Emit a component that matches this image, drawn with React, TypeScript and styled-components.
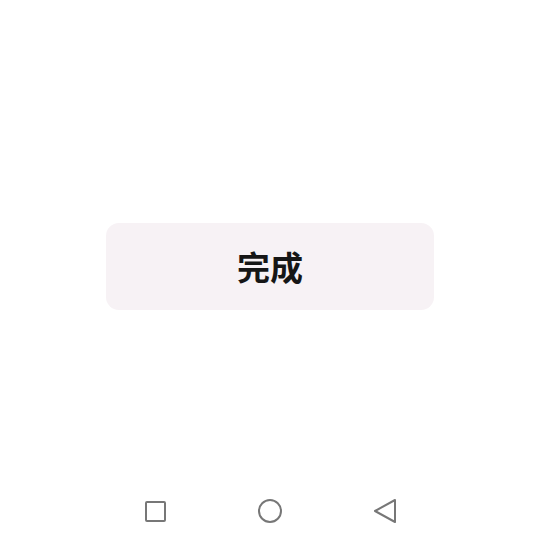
import styled, { createGlobalStyle } from "styled-components";

const Global = createGlobalStyle`
  html, body {
    margin: 0;
    padding: 0;
    background: #ffffff;
  }
  body {
    font-family: "Noto Sans CJK SC", "Noto Sans", sans-serif;
  }
`;

const Screen = styled.div`
  width: 540px;
  height: 540px;
  display: flex;
  flex-direction: column;
  background: #ffffff;
`;

const Content = styled.div`
  flex: 1;
  display: flex;
  justify-content: center;
  padding-top: 223px;
  box-sizing: border-box;
`;

const DoneButton = styled.button`
  width: 328px;
  height: 87px;
  border: none;
  border-radius: 13px;
  background: #f7f2f5;
  color: #161616;
  font-family: "Noto Sans CJK SC", sans-serif;
  font-size: 33px;
  font-weight: 700;
  display: flex;
  align-items: center;
  justify-content: center;
  padding: 0 0 2px;
  cursor: pointer;
`;

const NavBar = styled.nav`
  height: 58px;
  display: flex;
  align-items: center;
  justify-content: center;
  gap: 89px;
`;

const NavIcon = styled.svg`
  width: 26px;
  height: 26px;
  color: #777777;
  display: block;
`;

export default function App() {
  return (
    <>
      <Global />
      <Screen>
        <Content>
          <DoneButton>完成</DoneButton>
        </Content>
        <NavBar>
          <NavIcon viewBox="0 0 26 26" fill="none" stroke="currentColor" strokeWidth="2">
            <rect x="4" y="4" width="19" height="19" rx="1" />
          </NavIcon>
          <NavIcon viewBox="0 0 26 26" fill="none" stroke="currentColor" strokeWidth="2">
            <circle cx="13" cy="13" r="11" />
          </NavIcon>
          <NavIcon viewBox="0 0 26 26" fill="none" stroke="currentColor" strokeWidth="2" strokeLinejoin="round">
            <path d="M23 2 L3 13 L23 24 Z" />
          </NavIcon>
        </NavBar>
      </Screen>
    </>
  );
}
